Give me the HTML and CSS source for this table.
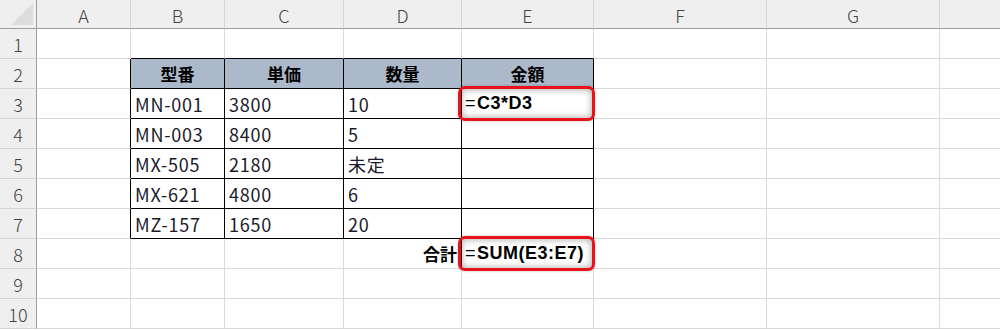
FILE: index.html
```html
<!DOCTYPE html>
<html lang="ja">
<head>
<meta charset="utf-8">
<link rel="stylesheet" href="styles.css">
</head>
<body>
<div class="sheet">
  <div class="corner"><span class="tri"></span></div>
  <div class="ch">A</div><div class="ch">B</div><div class="ch">C</div><div class="ch">D</div><div class="ch">E</div><div class="ch">F</div><div class="ch">G</div><div class="ch"></div>

  <div class="rh">1</div>
  <div class="c"></div><div class="c tt"></div><div class="c tt"></div><div class="c tt"></div><div class="c tt"></div><div class="c"></div><div class="c"></div><div class="c"></div>

  <div class="rh">2</div>
  <div class="c tl"></div><div class="c t hd">型番</div><div class="c t hd">単価</div><div class="c t hd">数量</div><div class="c t hd">金額</div><div class="c"></div><div class="c"></div><div class="c"></div>

  <div class="rh">3</div>
  <div class="c tl"></div><div class="c t">MN-001</div><div class="c t">3800</div><div class="c t">10</div><div class="c t hl"><span class="box"></span><span class="f"><span class="eq">=</span>C3*D3</span></div><div class="c"></div><div class="c"></div><div class="c"></div>

  <div class="rh">4</div>
  <div class="c tl"></div><div class="c t">MN-003</div><div class="c t">8400</div><div class="c t">5</div><div class="c t"></div><div class="c"></div><div class="c"></div><div class="c"></div>

  <div class="rh">5</div>
  <div class="c tl"></div><div class="c t">MX-505</div><div class="c t">2180</div><div class="c t">未定</div><div class="c t"></div><div class="c"></div><div class="c"></div><div class="c"></div>

  <div class="rh">6</div>
  <div class="c tl"></div><div class="c t">MX-621</div><div class="c t">4800</div><div class="c t">6</div><div class="c t"></div><div class="c"></div><div class="c"></div><div class="c"></div>

  <div class="rh">7</div>
  <div class="c tl"></div><div class="c t">MZ-157</div><div class="c t">1650</div><div class="c t">20</div><div class="c t"></div><div class="c"></div><div class="c"></div><div class="c"></div>

  <div class="rh">8</div>
  <div class="c"></div><div class="c"></div><div class="c"></div><div class="c sum">合計</div><div class="c hl"><span class="box"></span><span class="f"><span class="eq">=</span>SUM(E3:E7)</span></div><div class="c"></div><div class="c"></div><div class="c"></div>

  <div class="rh">9</div>
  <div class="c"></div><div class="c"></div><div class="c"></div><div class="c"></div><div class="c"></div><div class="c"></div><div class="c"></div><div class="c"></div>

  <div class="rh">10</div>
  <div class="c"></div><div class="c"></div><div class="c"></div><div class="c"></div><div class="c"></div><div class="c"></div><div class="c"></div><div class="c"></div>
</div>
</body>
</html>
```

FILE: styles.css
```css
* { box-sizing: border-box; }
html, body { margin: 0; padding: 0; background: #fff; }
body {
  font-family: "Noto Sans CJK JP", "Noto Sans", sans-serif;
  width: 1000px;
  height: 330px;
  overflow: hidden;
}
.sheet {
  display: grid;
  grid-template-columns: 37px 94px 94px 119px 118px 132px 173px 173px 61px;
  grid-template-rows: 30px repeat(10, 30px);
  margin-top: -1px;
}
.corner {
  background: #efefef;
  border-right: 1px solid #9e9e9e;
  border-bottom: 1px solid #9e9e9e;
  position: relative;
}
.tri {
  position: absolute;
  right: 3px;
  bottom: 3px;
  width: 0;
  height: 0;
  border-left: 22px solid transparent;
  border-bottom: 22px solid #dcdcdc;
}
.ch {
  background: #efefef;
  border-right: 1px solid #d6d6d6;
  border-bottom: 1px solid #9e9e9e;
  display: flex;
  align-items: center;
  justify-content: center;
  padding-top: 2px;
  color: #444;
  font-size: 18px;
  font-weight: 300;
}
.rh {
  background: #efefef;
  border-right: 1px solid #9e9e9e;
  border-bottom: 1px solid #d6d6d6;
  display: flex;
  align-items: center;
  justify-content: center;
  color: #444;
  font-size: 18px;
  font-weight: 300;
}
.c {
  border-right: 1px solid #dadada;
  border-bottom: 1px solid #dadada;
  display: flex;
  align-items: center;
  padding-left: 4px;
  font-size: 18px;
  letter-spacing: 0.8px;
  color: #1a1a2a;
  white-space: nowrap;
}
.tt { border-bottom-color: #000; }
.tl { border-right-color: #000; }
.t { border-right-color: #000; border-bottom-color: #000; }
.hd {
  background: #acb9ca;
  justify-content: center;
  padding-left: 0;
  font-weight: bold;
  font-size: 17px;
  letter-spacing: 0;
  color: #000;
}
.sum {
  justify-content: flex-end;
  padding-right: 4px;
  font-weight: bold;
  font-size: 17px;
  letter-spacing: 0;
  color: #000;
  border-right-color: #000;
}
.hl { position: relative; overflow: visible; }
.box {
  position: absolute;
  left: -4px;
  top: -3px;
  right: -2px;
  bottom: -3px;
  border: 3.5px solid #e8121b;
  border-radius: 7px;
  box-shadow: inset 0 0 6px 1px rgba(0, 0, 0, 0.3), 0 0 3px rgba(0, 0, 0, 0.25);
  z-index: 2;
}
.f {
  position: relative;
  z-index: 3;
  font-weight: bold;
  color: #000;
  font-size: 18px;
  letter-spacing: 0.5px;
  font-family: "Liberation Sans", "Noto Sans CJK JP", sans-serif;
  margin-left: -1px;
}
.eq {
  font-weight: normal;
  margin-right: 1px;
}
```
